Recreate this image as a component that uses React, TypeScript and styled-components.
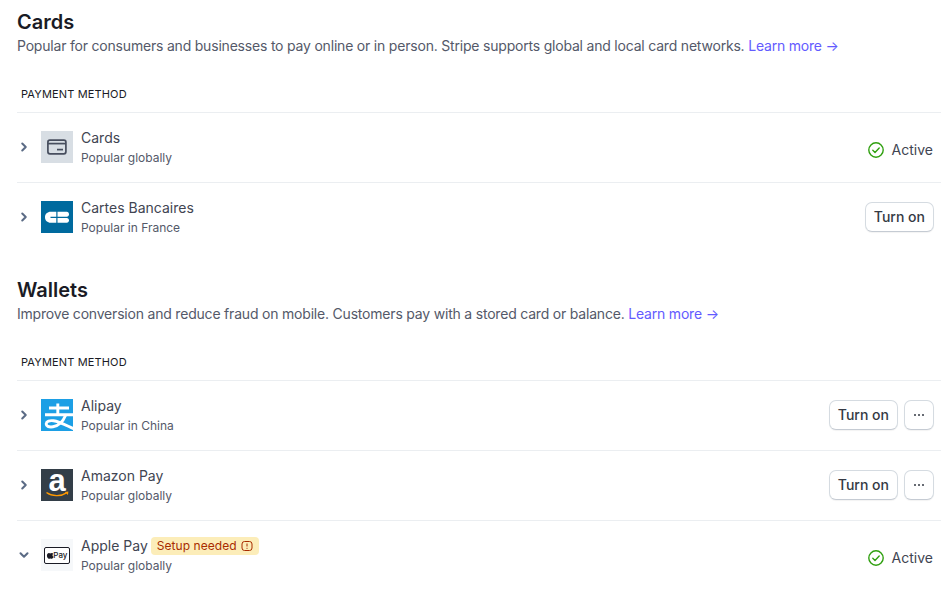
import {ReactNode} from "react";
import styled, {createGlobalStyle} from "styled-components";
import {ChevronDown, ChevronRight} from "lucide-react";

const GlobalStyle = createGlobalStyle`
    html, body {
        margin: 0;
        padding: 0;
        background: #fff;
        overflow: hidden;
    }

    body {
        font-family: Inter, "Liberation Sans", sans-serif;
        color: #414552;
        -webkit-font-smoothing: antialiased;
    }
`;

const Page = styled.main`
    display: flex;
    flex-direction: column;
    gap: 25px;
    padding: 10px 7px 0 17px;
`;

const Section = styled.section`
    display: flex;
    flex-direction: column;
`;

const Title = styled.h2`
    margin: 0;
    font-size: 20px;
    line-height: 24px;
    font-weight: 600;
    color: #1a1b25;
`;

const Description = styled.p`
    margin: 2px 0 0;
    font-size: 14px;
    line-height: 20px;
    letter-spacing: -0.2px;
    color: #545969;
`;

const LearnMore = styled.a`
    color: #635bff;
`;

const TableHeader = styled.div`
    margin-top: 20px;
    padding: 0 4px;
    height: 36px;
    display: flex;
    align-items: center;
    font-size: 11px;
    font-weight: 400;
    letter-spacing: 0.15px;
    color: #1a1b25;
    text-transform: uppercase;
    border-bottom: 1px solid #ebeef1;
`;

const Row = styled.div`
    display: flex;
    align-items: center;
    box-sizing: border-box;
    height: 70px;
    padding-bottom: 2px;
    border-bottom: 1px solid #ebeef1;

    &:last-child {
        border-bottom-color: transparent;
    }
`;

const Toggle = styled.span`
    display: flex;
    width: 14px;
    margin-right: 10px;
    justify-content: center;
    color: #5b6b85;
`;

const LogoBox = styled.span<{$bg: string}>`
    display: flex;
    width: 32px;
    height: 32px;
    flex: none;
    background: ${({$bg}) => $bg};
`;

const Info = styled.div`
    display: flex;
    flex-direction: column;
    gap: 2px;
    margin-left: 8px;
    flex: 1;
`;

const NameLine = styled.div`
    display: flex;
    align-items: center;
    gap: 3px;
`;

const Name = styled.span`
    font-size: 14px;
    line-height: 20px;
    color: #414552;
`;

const Sub = styled.span`
    font-size: 12px;
    line-height: 16px;
    color: #545969;
`;

const Badge = styled.span`
    display: inline-flex;
    align-items: center;
    gap: 4px;
    height: 18px;
    padding: 0 6px 0 6px;
    border-radius: 4px;
    background: #fcedb9;
    color: #a82c00;
    font-size: 12px;
    line-height: 16px;
    letter-spacing: 0.05px;
`;

const Actions = styled.div`
    display: flex;
    align-items: center;
    gap: 6px;
    padding-right: 7px;
`;

const Status = styled.span`
    display: flex;
    align-items: center;
    gap: 8px;
    margin-right: 1px;
    padding-top: 6px;
    font-size: 14px;
    color: #414552;
`;

const Button = styled.button`
    height: 30px;
    padding: 0 8px;
    display: flex;
    align-items: center;
    justify-content: center;
    background: #fff;
    border: 1px solid #d5dbe1;
    border-bottom-color: #c5cbd3;
    border-radius: 7px;
    box-shadow: 0 1px 1px rgba(0, 0, 0, 0.05);
    font-family: inherit;
    font-size: 14px;
    font-weight: 500;
    color: #353a44;
`;

const MoreButton = styled(Button)`
    width: 30px;
    padding: 0;
`;

function CardsLogo() {
    return (
        <svg width="32" height="32" viewBox="0 0 32 32" fill="none" stroke="#474e5e" strokeWidth="1.7">
            <rect x="6.900" y="9.200" width="18" height="13.600" rx="2" />
            <path d="M6.900 12.600h18" />
            <path d="M16 18.600h6" />
        </svg>
    );
}

function CbLogo() {
    return (
        <svg width="32" height="32" viewBox="0 0 32 32" fill="#fff">
            <path d="M15.300 10.800v4.900H9.500v1.200h5.800v4.900H9.700c-3.300 0-5.700-2.300-5.700-5.500s2.400-5.500 5.700-5.500z" />
            <path d="M16.500 10.800h9.300c1.300 0 2.200 1 2.200 2.400s-.9 2.500-2.200 2.500h-9.300z" />
            <path d="M16.500 16.900h9.300c1.300 0 2.200 1 2.200 2.400s-.9 2.500-2.200 2.500h-9.300z" />
        </svg>
    );
}

function AlipayLogo() {
    return (
        <svg width="32" height="32" viewBox="0 0 32 32" fill="none" stroke="#fff" strokeWidth="2.900">
            <path d="M8 9h20M16.800 4.500v11.500M4 15.800h28" />
            <path d="M24.500 16.500c-2.500 6-7 10.500-12.500 11.300-4.500.6-7-.8-6.800-3 .2-2.500 3.500-3.600 7.300-3 6 .9 12.500 4.500 20 7.800" />
        </svg>
    );
}

function AmazonLogo() {
    return (
        <svg width="32" height="32" viewBox="0 0 32 32" overflow="visible">
            <text
                x="16"
                y="22"
                textAnchor="middle"
                fontFamily="'Liberation Sans', sans-serif"
                fontWeight="700"
                fontSize="31"
                fill="#fff"
            >
                a
            </text>
            <path d="M5.500 23.500c5.500 4 14.500 4.200 20 .4" fill="none" stroke="#f90" strokeWidth="1.400" />
            <path d="M23.800 23l3.600-.4-.5 3.500z" fill="#f90" />
        </svg>
    );
}

function ApplePayLogo() {
    return (
        <svg width="32" height="32" viewBox="0 0 32 32">
            <rect x="3.500" y="8.500" width="25" height="16" rx="1.500" fill="#fff" stroke="#1a1b25" />
            <path
                d="M9.200 14.400c.5 0 1-.4 1.700-.4.600 0 1.100.3 1.400.8-1.200.7-1 2.500.3 3-.4 1-1 1.900-1.700 1.900-.5 0-.8-.3-1.500-.3s-1 .3-1.500.3c-.9 0-2-1.800-2-3.300 0-1.500 1-2.400 2-2.400.6 0 1.200.4 1.800.4z"
                fill="#1a1b25"
            />
            <text x="12.300" y="19.200" fontFamily="Inter, sans-serif" fontSize="8" fontWeight="500" fill="#1a1b25">
                Pay
            </text>
        </svg>
    );
}

function ActiveIcon() {
    return (
        <svg width="16" height="16" viewBox="0 0 16 16" fill="none" stroke="#30a010" strokeWidth="1.400">
            <circle cx="8" cy="8" r="7.200" />
            <path d="M4.800 8.300l2.200 2.100 4.200-4.300" strokeLinecap="round" strokeLinejoin="round" />
        </svg>
    );
}

function WarningIcon() {
    return (
        <svg width="12" height="12" viewBox="0 0 12 12" fill="none" stroke="#a82c00" strokeWidth="1">
            <rect x="1" y="1.500" width="10" height="9" rx="2.500" />
            <path d="M6 3.500v3M6 7.800v1" />
        </svg>
    );
}

function MoreIcon() {
    return (
        <svg width="12" height="12" viewBox="0 0 12 12" fill="#353a44">
            <circle cx="2" cy="6" r="1" />
            <circle cx="6" cy="6" r="1" />
            <circle cx="10" cy="6" r="1" />
        </svg>
    );
}

function ActiveStatus() {
    return (
        <Status>
            <ActiveIcon />
            Active
        </Status>
    );
}

interface MethodRowProps {
    name: string;
    sub: string;
    logo: ReactNode;
    logoBg: string;
    action: ReactNode;
    badge?: ReactNode;
    open?: boolean;
}

function MethodRow({name, sub, logo, logoBg, action, badge = null, open = false}: MethodRowProps) {
    return (
        <Row>
            <Toggle>
                {open ? <ChevronDown size={20} strokeWidth={3.5} /> : <ChevronRight size={20} strokeWidth={3.5} />}
            </Toggle>
            <LogoBox $bg={logoBg}>{logo}</LogoBox>
            <Info>
                <NameLine>
                    <Name>{name}</Name>
                    {badge}
                </NameLine>
                <Sub>{sub}</Sub>
            </Info>
            <Actions>{action}</Actions>
        </Row>
    );
}

function App() {
    return (
        <Page>
            <GlobalStyle />
            <Section>
                <Title>Cards</Title>
                <Description>
                    Popular for consumers and businesses to pay online or in person. Stripe supports global and local
                    card networks. <LearnMore>Learn more →</LearnMore>
                </Description>
                <TableHeader>Payment method</TableHeader>
                <MethodRow
                    name="Cards"
                    sub="Popular globally"
                    logo={<CardsLogo />}
                    logoBg="#d8dee4"
                    action={<ActiveStatus />}
                />
                <MethodRow
                    name="Cartes Bancaires"
                    sub="Popular in France"
                    logo={<CbLogo />}
                    logoBg="#006a9e"
                    action={<Button>Turn on</Button>}
                />
            </Section>
            <Section>
                <Title>Wallets</Title>
                <Description>
                    Improve conversion and reduce fraud on mobile. Customers pay with a stored card or balance.{" "}
                    <LearnMore>Learn more →</LearnMore>
                </Description>
                <TableHeader>Payment method</TableHeader>
                <MethodRow
                    name="Alipay"
                    sub="Popular in China"
                    logo={<AlipayLogo />}
                    logoBg="#1c9fe5"
                    action={
                        <>
                            <Button>Turn on</Button>
                            <MoreButton><MoreIcon /></MoreButton>
                        </>
                    }
                />
                <MethodRow
                    name="Amazon Pay"
                    sub="Popular globally"
                    logo={<AmazonLogo />}
                    logoBg="#333e48"
                    action={
                        <>
                            <Button>Turn on</Button>
                            <MoreButton><MoreIcon /></MoreButton>
                        </>
                    }
                />
                <MethodRow
                    name="Apple Pay"
                    sub="Popular globally"
                    logo={<ApplePayLogo />}
                    logoBg="#f6f8fa"
                    action={<ActiveStatus />}
                    badge={
                        <Badge>
                            Setup needed
                            <WarningIcon />
                        </Badge>
                    }
                    open
                />
            </Section>
        </Page>
    );
}

export default App;
